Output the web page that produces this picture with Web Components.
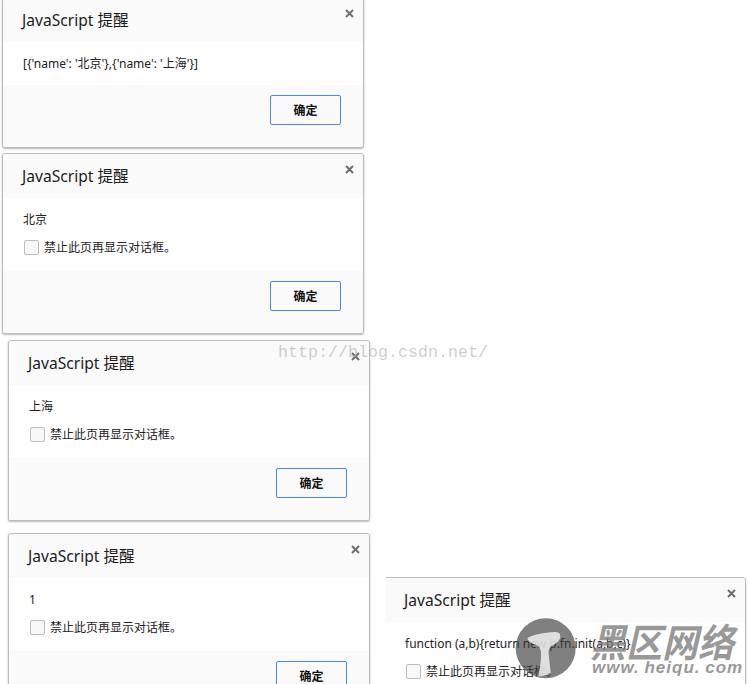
<!DOCTYPE html>
<html lang="zh-CN">
<head>
<meta charset="utf-8">
<title>JavaScript 提醒</title>
<style>
html,body{margin:0;padding:0;background:#fff;}
body{width:748px;height:684px;overflow:hidden;position:relative;font-family:"Noto Sans","Noto Sans CJK SC",sans-serif;}
</style>
</head>
<body>
<js-dialog style="--x:2px;--y:-3px">[{'name': '北京'},{'name': '上海'}]</js-dialog>
<js-dialog suppress style="--x:2px;--y:153px">北京</js-dialog>
<js-dialog suppress style="--x:8px;--y:340px">上海</js-dialog>
<js-dialog suppress style="--x:8px;--y:533px">1</js-dialog>
<js-dialog suppress style="--x:384px;--y:577px;--clip:2px">function (a,b){return new p.fn.init(a,b,c)}</js-dialog>
<blog-mark></blog-mark>
<site-mark></site-mark>
<script>
class JsDialog extends HTMLElement{
  constructor(){
    super();
    const s=this.attachShadow({mode:'open'});
    const suppress=this.hasAttribute('suppress');
    s.innerHTML=`<style>
      :host{display:flex;flex-direction:column;position:absolute;left:var(--x);top:var(--y);width:362px;box-sizing:border-box;
        border:1px solid #bcbcbc;border-radius:3px;background:#fff;box-shadow:0 1px 2px rgba(0,0,0,.28);
        clip-path:inset(0 -4px -4px var(--clip,-4px));color:#222;font:12px/21px "Noto Sans","Noto Sans CJK SC",sans-serif;}
      header{height:44px;box-sizing:border-box;background:#fafafa;display:flex;align-items:center;justify-content:space-between;padding:0 9px 1px 19px;border-radius:2px 2px 0 0;}
      h1{margin:0;font-weight:400;font-size:15.6px;line-height:20px;color:#1c1c1c;}
      svg.x{width:9px;height:9px;margin:-12px 0 0;}
      main{padding:11px 20px;display:flex;flex-direction:column;gap:6px;}
      .row{display:flex;align-items:center;gap:5px;height:22px;margin:0 0 2px 1px;}
      .box{width:13px;height:13px;border:1px solid #bdbdbd;border-radius:2px;background:#f8f8f8;}
      footer{height:62px;box-sizing:border-box;background:#fafafa;padding:10px 22px 0 0;display:flex;justify-content:flex-end;align-items:flex-start;border-radius:0 0 2px 2px;}
      .ok{width:71px;height:30px;box-sizing:border-box;border:1px solid #4a86e8;border-radius:2px;background:#fafafa;font:700 12px/28px "Noto Sans CJK SC","Noto Sans",sans-serif;color:#111;text-align:center;}
    </style>
    <header><h1>JavaScript 提醒</h1>
      <svg class="x" viewBox="0 0 9 9"><path d="M1 1L8 8M8 1L1 8" stroke="#6e6e6e" stroke-width="2" fill="none"/></svg></header>
    <main><div><slot></slot></div>${suppress?'<div class="row"><span class="box"></span><span>禁止此页再显示对话框。</span></div>':''}</main>
    <footer><div class="ok">确定</div></footer>`;
  }
}
customElements.define('js-dialog',JsDialog);

class BlogMark extends HTMLElement{
  constructor(){
    super();
    this.attachShadow({mode:'open'}).innerHTML=`<style>
      :host{display:block;position:absolute;left:278px;top:343px;font:16.67px/20px "Liberation Mono",monospace;color:rgba(180,180,170,.65);white-space:nowrap;}
    </style>http://blog.csdn.net/`;
  }
}
customElements.define('blog-mark',BlogMark);

class SiteMark extends HTMLElement{
  constructor(){
    super();
    this.attachShadow({mode:'open'}).innerHTML=`<style>
      :host{display:block;position:absolute;left:510px;top:610px;width:238px;height:74px;}
      svg{position:absolute;left:0;top:0;width:80px;height:74px;}
      .cn{position:absolute;left:80px;top:9px;font:italic 700 36px/42px "Noto Sans CJK SC",sans-serif;color:rgba(120,120,120,.75);white-space:nowrap;transform:scaleY(1.08);}
      .en{position:absolute;left:82px;top:47px;font:italic 700 17px/22px "Liberation Sans",sans-serif;color:rgba(125,125,125,.8);white-space:nowrap;word-spacing:-1px;letter-spacing:1px;}
    </style>
    <svg viewBox="0 0 240 222">
      <circle cx="107" cy="115" r="90" fill="rgba(60,60,60,.65)"/>
      <path d="M52 84C70 74 100 68 135 66C145 66 151 70 151 78C151 92 138 100 128 106C118 112 115 120 116 132L122 188C112 196 96 200 85 198C90 170 94 150 93 128C92 116 88 108 76 104C64 100 54 94 52 84Z" fill="rgba(250,250,250,.78)"/>
    </svg>
    <div class="cn">黑区网络</div><div class="en">www. heiqu. com</div>`;
  }
}
customElements.define('site-mark',SiteMark);
</script>
</body>
</html>
